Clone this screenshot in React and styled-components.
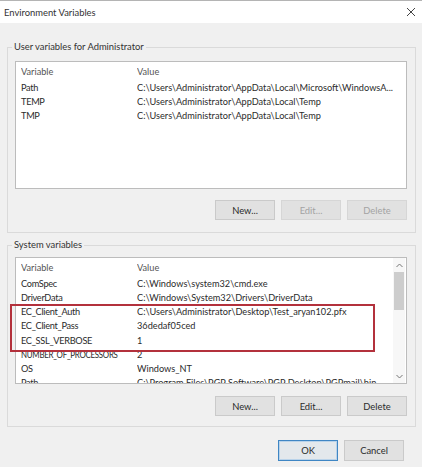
import styled, { createGlobalStyle, css } from 'styled-components';

const GlobalStyle = createGlobalStyle`
  html, body {
    margin: 0;
    padding: 0;
    background: #f0f0f0;
  }
  body {
    font-family: Lato, 'Noto Sans', sans-serif;
    font-size: 9.2px;
    color: #2b2b2b;
  }
`;

const Window = styled.div`
  width: 422px;
  height: 467px;
  box-sizing: border-box;
  background: #f0f0f0;
  border-top: 1px solid #b4b4b4;
  overflow: hidden;
`;

const TitleBar = styled.div`
  height: 22px;
  background: #ffffff;
  display: flex;
  align-items: center;
  justify-content: space-between;
  padding: 0 6px 0 4px;
  font-size: 9.4px;
  color: #333;
`;

const Body = styled.div`
  padding: 0 6px 0 7px;
`;

const Group = styled.fieldset`
  margin: ${({ $top }) => $top}px 0 0;
  padding: 0 8px ${({ $bottom }) => $bottom}px 7px;
  border: 1px solid #dadada;
  min-width: 0;
`;

const Legend = styled.legend`
  margin-left: -3px;
  padding: 0 2px;
  line-height: 14px;
  font-size: 9.4px;
  color: #333;
`;

const ListFrame = styled.div`
  position: relative;
  margin-top: ${({ $top }) => $top}px;
`;

const ListBox = styled.div`
  height: ${({ $h }) => $h}px;
  background: #fff;
  border: 1px solid #bcbcbc;
  overflow: hidden;
  display: flex;
`;

const Rows = styled.div`
  flex: 1;
  min-width: 0;
  padding-top: 1px;
`;

const Row = styled.div`
  display: grid;
  grid-template-columns: 116px 1fr;
  height: ${({ $head }) => ($head ? 17 : 14.25)}px;
  align-items: center;
  padding-left: 5px;
  padding-right: 8px;
  white-space: nowrap;
  color: ${({ $head }) => ($head ? '#555' : '#2b2b2b')};
`;

const NameCell = styled.span`
  letter-spacing: -0.3px;
  ${({ $fit }) =>
    $fit &&
    css`
      display: inline-block;
      transform: scaleX(${$fit});
      transform-origin: left center;
    `}
`;

const Cell = styled.span`
  overflow: hidden;
  text-overflow: ellipsis;
`;

const ScrollBar = styled.div`
  width: 12px;
  margin-right: 1px;
  display: flex;
  flex-direction: column;
  align-items: center;
  background: #f7f7f7;
`;

const Arrow = styled.div`
  height: 14px;
  display: flex;
  align-items: center;
  justify-content: center;
`;

const Thumb = styled.div`
  width: 10px;
  height: 38px;
  margin-top: 0;
  background: #cdcdcd;
`;

const Track = styled.div`
  flex: 1;
`;

const Highlight = styled.div`
  position: absolute;
  left: -5px;
  top: 47px;
  width: 365px;
  height: 48px;
  box-sizing: border-box;
  border: 2.5px solid #b3313c;
  pointer-events: none;
`;

const Buttons = styled.div`
  display: flex;
  justify-content: flex-end;
  gap: 6px;
  margin-top: ${({ $top }) => $top}px;
  padding-right: ${({ $right }) => $right || 0}px;
`;

const Button = styled.button`
  width: 60px;
  height: ${({ $h }) => $h || 20}px;
  box-sizing: border-box;
  font-family: inherit;
  font-size: 9.4px;
  color: ${({ disabled }) => (disabled ? '#a3a3a3' : '#2b2b2b')};
  background: ${({ $default }) => ($default ? '#e3e8ec' : '#e1e1e1')};
  border: 1px solid ${({ $default, disabled }) =>
    $default ? '#3f86c4' : disabled ? '#d6d6d6' : '#cacaca'};
  box-shadow: ${({ $default }) => ($default ? 'inset 0 0 0 1px #b9d3ea' : 'none')};
  padding: 0;
`;

const Chevron = ({ up }) => (
  <svg width="7" height="5" viewBox="0 0 7 5">
    <path
      d={up ? 'M0.5 4 L3.5 1 L6.5 4' : 'M0.5 1 L3.5 4 L6.5 1'}
      fill="none"
      stroke="#777"
      strokeWidth="1"
    />
  </svg>
);

const userVars = [
  ['Path', 'C:\\Users\\Administrator\\AppData\\Local\\Microsoft\\WindowsA...'],
  ['TEMP', 'C:\\Users\\Administrator\\AppData\\Local\\Temp'],
  ['TMP', 'C:\\Users\\Administrator\\AppData\\Local\\Temp'],
];

const systemVars = [
  ['ComSpec', 'C:\\Windows\\system32\\cmd.exe'],
  ['DriverData', 'C:\\Windows\\System32\\Drivers\\DriverData'],
  ['EC_Client_Auth', 'C:\\Users\\Administrator\\Desktop\\Test_aryan102.pfx'],
  ['EC_Client_Pass', '36dedaf05ced'],
  ['EC_SSL_VERBOSE', '1'],
  ['NUMBER_OF_PROCESSORS', '2', 0.86],
  ['OS', 'Windows_NT'],
  ['Path', 'C:\\Program Files\\PGP Software\\PGP Desktop\\PGPmail\\bin;C:\\Windows'],
];

const VarList = ({ items }) => (
  <Rows>
    <Row $head>
      <Cell>Variable</Cell>
      <Cell>Value</Cell>
    </Row>
    {items.map(([name, value, fit]) => (
      <Row key={name}>
        <NameCell $fit={fit}>{name}</NameCell>
        <Cell>{value}</Cell>
      </Row>
    ))}
  </Rows>
);

export default function App() {
  return (
    <>
      <GlobalStyle />
      <Window>
        <TitleBar>
          <span>Environment Variables</span>
          <svg width="10" height="10" viewBox="0 0 10 10">
            <path d="M1 1 L9 9 M9 1 L1 9" stroke="#444" strokeWidth="1" />
          </svg>
        </TitleBar>
        <Body>
          <Group $top={17} $bottom={12}>
            <Legend>User variables for Administrator</Legend>
            <ListFrame $top={7}>
              <ListBox $h={126}>
                <VarList items={userVars} />
              </ListBox>
            </ListFrame>
            <Buttons $top={11}>
              <Button>New...</Button>
              <Button disabled>Edit...</Button>
              <Button disabled>Delete</Button>
            </Buttons>
          </Group>
          <Group $top={5} $bottom={10}>
            <Legend>System variables</Legend>
            <ListFrame $top={5}>
              <ListBox $h={125}>
                <VarList items={systemVars} />
                <ScrollBar>
                  <Arrow>
                    <Chevron up />
                  </Arrow>
                  <Thumb />
                  <Track />
                  <Arrow>
                    <Chevron />
                  </Arrow>
                </ScrollBar>
              </ListBox>
              <Highlight />
            </ListFrame>
            <Buttons $top={12}>
              <Button>New...</Button>
              <Button>Edit...</Button>
              <Button>Delete</Button>
            </Buttons>
          </Group>
          <Buttons $top={13} $right={12}>
            <Button $default $h={21}>OK</Button>
            <Button $h={21}>Cancel</Button>
          </Buttons>
        </Body>
      </Window>
    </>
  );
}
